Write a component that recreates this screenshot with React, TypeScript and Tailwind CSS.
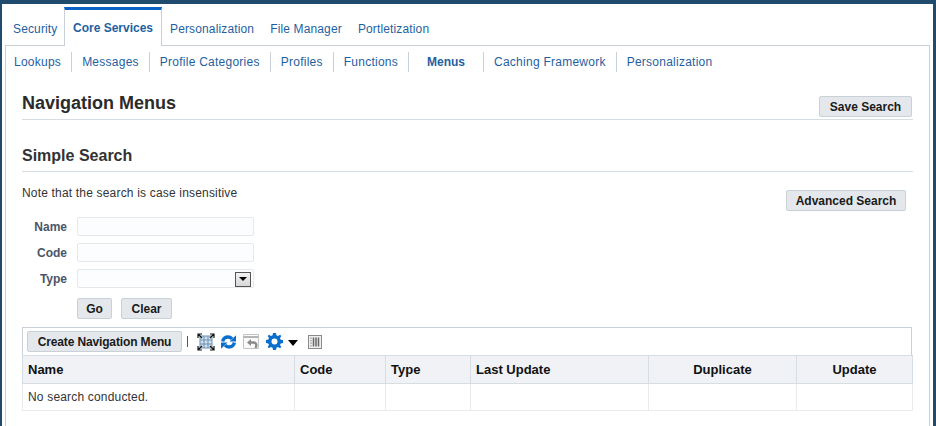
const tabs = ['Security', 'Core Services', 'Personalization', 'File Manager', 'Portletization'];
const subTabs = ['Lookups', 'Messages', 'Profile Categories', 'Profiles', 'Functions', 'Menus', 'Caching Framework', 'Personalization'];

const buttonClass =
    'flex h-[21px] items-center justify-center rounded-[2px] border border-[#c9d0d7] bg-[#e4e8ec] text-xs font-bold tracking-normal text-[#1a1a1a]';

function Field({ label, select }: { label: string; select?: boolean }) {
    return (
        <div className="flex h-[26px] items-center">
            <span className="w-[45px] pt-px text-right text-xs font-bold tracking-normal text-[#4a5568]">{label}</span>
            <div className="relative ml-[10px] h-[19px] w-[177px] rounded-[2px] border border-[#e6e9ec] bg-[#fcfdfe]">
                {select && (
                    <div className="absolute top-[2px] right-[2px] flex h-[15px] w-[16px] items-center justify-center border border-[#555] bg-gradient-to-b from-[#f2f2f2] to-[#d8d8d8]">
                        <span className="h-0 w-0 border-x-[4px] border-t-[4px] border-x-transparent border-t-black" />
                    </div>
                )}
            </div>
        </div>
    );
}

function Toolbar() {
    return (
        <div className="flex h-[28px] items-center border border-b-0 border-[#c9d0d7] pl-1">
            <button className={`${buttonClass} w-[155px]`}>
                <span className="tracking-[-0.14px]">Create Navigation Menu</span>
            </button>
            <span className="ml-[5px] h-[11px] w-px bg-[#555]" />
            <svg className="ml-[9px]" width="18" height="18" viewBox="0 0 18 18" fill="none">
                <rect x="3" y="3" width="12" height="12" fill="#cfe0ee" stroke="#6f8fb0" />
                <path d="M3 7h12M3 11h12M7 3v12M11 3v12" stroke="#6f8fb0" />
                <path d="M1 5V1h4M13 1h4v4M17 13v4h-4M5 17H1v-4M1 1l4 4M17 1l-4 4M17 17l-4-4M1 17l4-4" stroke="#111" strokeWidth="1.2" />
            </svg>
            <svg className="ml-[6px]" width="15" height="14" viewBox="0 0 15 14" fill="none">
                <path d="M1.700 6.500C2 3.500 4.500 2 7 2c1.800 0 3 .7 4 1.800" stroke="#0a6ecf" strokeWidth="3.400" />
                <path d="M8.500 6.500h6.500V.3z" fill="#0a6ecf" />
                <path d="M13.300 7.500C13 10.500 10.500 12 8 12c-1.800 0-3-.7-4-1.800" stroke="#0a6ecf" strokeWidth="3.400" />
                <path d="M6.500 7.500H0v6.200z" fill="#0a6ecf" />
            </svg>
            <svg className="ml-[7px]" width="17" height="15" viewBox="0 0 17 15" fill="none">
                <path d="M.5 14.500V.5h15v14z" stroke="#c4c4c4" fill="#fafafa" />
                <path d="M.5 3h15" stroke="#b5b5b5" strokeWidth="2" />
                <path d="M7 8.500h3.500c3 0 3.500 3 2 5.500" stroke="#8a8a8a" strokeWidth="2.400" />
                <path d="M8 5v7L4 8.500z" fill="#8a8a8a" />
            </svg>
            <svg className="ml-[6px]" width="17" height="17" viewBox="0 0 17 17">
                <path
                    fill="#0a6ecf"
                    fillRule="evenodd"
                    d="M7 0h3l.4 2.300 1.700.7L14 1.700 15.300 3 14 5l.7 1.700 2.300.3v3l-2.300.4-.7 1.700 1.300 1.900L14 15.300 12.100 14l-1.700.7L10 17H7l-.4-2.300-1.700-.7L3 15.300 1.700 14 3 12.100l-.7-1.700L0 10V7l2.300-.4.7-1.600L1.700 3 3 1.700 4.900 3l1.700-.7zM8.500 5.500a3 3 0 1 0 0 6 3 3 0 0 0 0-6z"
                />
            </svg>
            <span className="mt-[3px] ml-[5px] h-0 w-0 border-x-[5px] border-t-[6px] border-x-transparent border-t-black" />
            <svg className="ml-[10px]" width="14" height="14" viewBox="0 0 14 14" fill="none">
                <rect x=".5" y=".5" width="13" height="13" fill="#efefef" stroke="#8a8a8a" />
                <path d="M3 2.500v9" stroke="#888" strokeDasharray="1.500 1" />
                <path d="M5.500 2.500v9M8 2.500v9M10.500 2.500v9" stroke="#666" strokeWidth="1.500" />
            </svg>
        </div>
    );
}

function ResultTable() {
    const cols = [
        { name: 'Name', w: 'w-[272px]', align: 'text-left' },
        { name: 'Code', w: 'w-[91px]', align: 'text-left' },
        { name: 'Type', w: 'w-[85px]', align: 'text-left' },
        { name: 'Last Update', w: 'w-[178px]', align: 'text-left' },
        { name: 'Duplicate', w: 'w-[148px]', align: 'text-center' },
        { name: 'Update', w: 'w-[116px]', align: 'text-center' },
    ];
    return (
        <table className="w-[890px] table-fixed border-collapse">
            <thead>
                <tr className="h-[28px] bg-[#f0f2f6]">
                    {cols.map((c) => (
                        <th
                            key={c.name}
                            className={`${c.w} ${c.align} border border-[#d6dde3] px-[5px] text-[13px] font-bold tracking-normal text-[#111]`}
                        >
                            {c.name}
                        </th>
                    ))}
                </tr>
            </thead>
            <tbody>
                <tr className="h-[27px]">
                    <td className="border border-[#e9ecef] px-[5px] text-xs text-[#333]">No search conducted.</td>
                    {cols.slice(1).map((c) => (
                        <td key={c.name} className="border border-[#e9ecef]" />
                    ))}
                </tr>
            </tbody>
        </table>
    );
}

export default function App() {
    return (
        <div
            className="h-[426px] overflow-hidden bg-[#1f4b6e] pt-1 pr-[3px] pl-0.5 tracking-[0.18px]"
            style={{ fontFamily: '"Liberation Sans", Arial, sans-serif' }}
        >
            <div className="h-full bg-white pl-[3px]">
                <div className="flex h-[41px] items-end">
                    {tabs.map((t, i) =>
                        i === 1 ? (
                            <div
                                key={t}
                                className="z-10 -mb-px flex h-[39px] w-[98px] items-center justify-center border-x border-t-[3px] border-x-[#c9d0d7] border-t-[#0a62c4] bg-white text-xs font-bold tracking-normal text-[#1f5f9f]"
                            >
                                {t}
                            </div>
                        ) : (
                            <div key={t} className={`flex h-[33px] items-center pt-px text-xs tracking-[0.14px] text-[#1f5f9f] ${i === 0 ? 'w-[59px] pl-2' : 'px-2'}`}>
                                {t}
                            </div>
                        ),
                    )}
                </div>
                <div className="h-[381px] w-[925px] border-x border-t border-[#c9d0d7]">
                    <div className="flex h-[32px] items-center pl-2 tracking-[0.25px]">
                        {subTabs.map((t, i) => (
                            <div key={t} className="flex h-[20px] items-center">
                                {i > 0 && <span className="mx-[10px] h-[20px] w-px bg-[#c9d0d7]" />}
                                <span className={t === 'Menus' ? 'mx-[8px] text-xs font-bold tracking-normal text-[#1f5f9f]' : 'text-xs text-[#1f5f9f]'}>{t}</span>
                            </div>
                        ))}
                    </div>
                    <div className="pl-4">
                        <div className="flex h-[42px] w-[891px] items-end justify-between border-b border-[#d6dde3] pb-[2px]">
                            <h1 className="text-lg font-bold tracking-normal text-[#2b2b2b]">Navigation Menus</h1>
                            <button className={`${buttonClass} mr-px w-[93px]`}>Save Search</button>
                        </div>
                        <div className="flex h-[52px] w-[891px] items-end border-b border-[#d6dde3] pb-[3px]">
                            <h2 className="text-base font-bold tracking-normal text-[#333]">Simple Search</h2>
                        </div>
                        <div className="flex w-[884px] items-start justify-between pt-[13px]">
                            <p className="text-xs text-[#333]">Note that the search is case insensitive</p>
                            <button className={`${buttonClass} mt-[5px] w-[120px]`}>Advanced Search</button>
                        </div>
                        <div className="mt-[2px]">
                            <Field label="Name" />
                            <Field label="Code" />
                            <Field label="Type" select />
                        </div>
                        <div className="mt-[7px] mb-[8px] flex gap-[9px] pl-[55px]">
                            <button className={`${buttonClass} w-[35px]`}>Go</button>
                            <button className={`${buttonClass} w-[51px]`}>Clear</button>
                        </div>
                        <div className="w-[890px]">
                            <Toolbar />
                            <ResultTable />
                        </div>
                    </div>
                </div>
            </div>
        </div>
    );
}
